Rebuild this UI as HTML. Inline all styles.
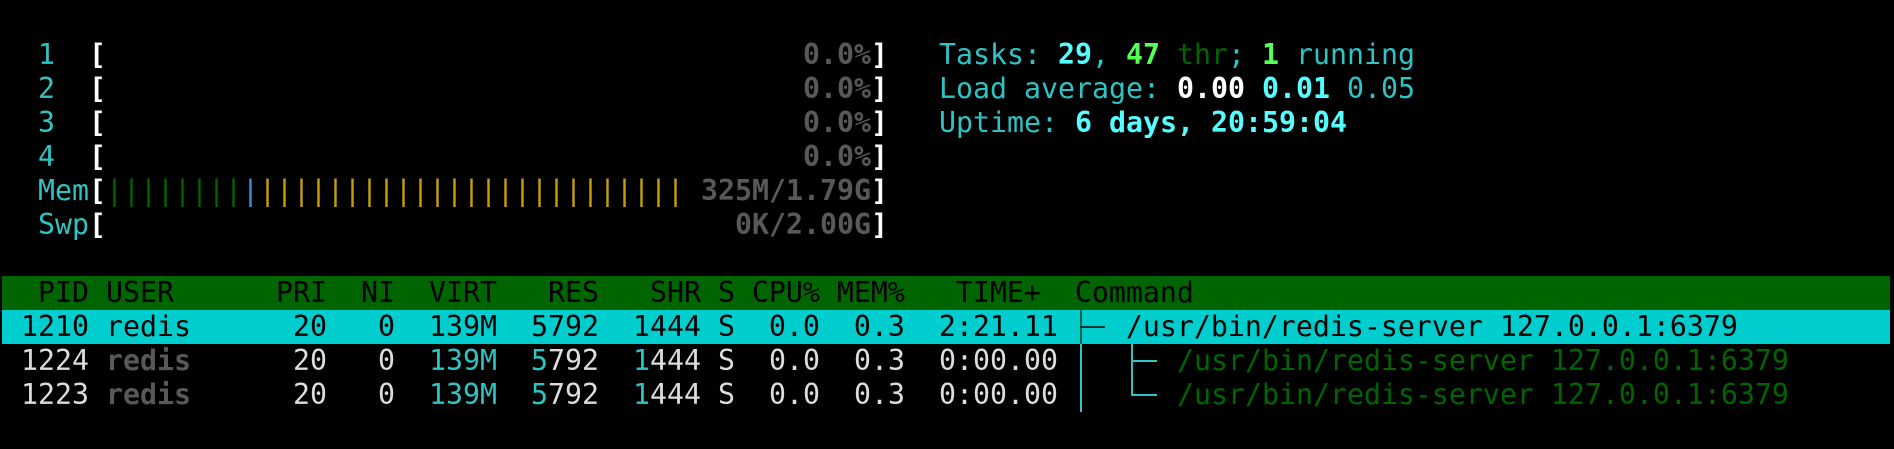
<!DOCTYPE html>
<html><head><meta charset="utf-8"><style>
html,body{margin:0;padding:0;background:#000;width:1894px;height:449px;overflow:hidden}
.l{position:absolute;left:4px;height:34px;line-height:34px;white-space:pre;font-family:"DejaVu Sans Mono","Liberation Mono",monospace;font-size:28.24px;color:#ddd}
.c{color:#2ec4c4}.bc{color:#55ffff;font-weight:bold}.g{color:#585858;font-weight:bold}.w{color:#fff;font-weight:bold}
.bg{color:#55ff55;font-weight:bold}.dg{color:#006400}.y{color:#c8a000}.bl{color:#3a8ee6}
.bar{position:absolute;left:2px;width:1888px;height:34px}
.ln{position:absolute}
</style></head><body>
<div class="l" style="top:38px">  <span class="c">1</span>  <span class="w">[</span>                                         <span class="g">0.0%</span><span class="w">]</span></div>
<div class="l" style="top:72px">  <span class="c">2</span>  <span class="w">[</span>                                         <span class="g">0.0%</span><span class="w">]</span></div>
<div class="l" style="top:106px">  <span class="c">3</span>  <span class="w">[</span>                                         <span class="g">0.0%</span><span class="w">]</span></div>
<div class="l" style="top:140px">  <span class="c">4</span>  <span class="w">[</span>                                         <span class="g">0.0%</span><span class="w">]</span></div>
<div class="l" style="top:174px">  <span class="c">Mem</span><span class="w">[</span><span class="dg">||||||||</span><span class="bl">|</span><span class="y">|||||||||||||||||||||||||</span> <span class="g">325M/1.79G</span><span class="w">]</span></div>
<div class="l" style="top:208px">  <span class="c">Swp</span><span class="w">[</span>                                     <span class="g">0K/2.00G</span><span class="w">]</span></div>

<div class="l" style="top:38px;left:939px"><span class="c">Tasks: </span><span class="bc">29</span><span class="c">, </span><span class="bg">47</span> <span class="dg">thr</span><span class="c">; </span><span class="bg">1</span><span class="c"> running</span></div>
<div class="l" style="top:72px;left:939px"><span class="c">Load average: </span><span class="w">0.00</span> <span class="bc">0.01</span> <span class="c">0.05</span></div>
<div class="l" style="top:106px;left:939px"><span class="c">Uptime: </span><span class="bc">6 days, 20:59:04</span></div>

<div class="bar" style="top:276px;background:#006400"></div>
<div class="bar" style="top:310px;background:#00cdcd"></div>
<div class="l" style="top:276px;color:#000">  PID USER      PRI  NI  VIRT   RES   SHR S CPU% MEM%   TIME+  Command</div>
<div class="l" style="top:310px;color:#000"> 1210 redis      20   0  139M  5792  1444 S  0.0  0.3  2:21.11    /usr/bin/redis-server 127.0.0.1:6379</div>
<div class="l" style="top:344px"> 1224 <span class="g">redis</span>      20   0  <span class="c">139M</span>  <span class="c">5</span>792  <span class="c">1</span>444 S  0.0  0.3  0:00.00       <span class="dg">/usr/bin/redis-server 127.0.0.1:6379</span></div>
<div class="l" style="top:378px"> 1223 <span class="g">redis</span>      20   0  <span class="c">139M</span>  <span class="c">5</span>792  <span class="c">1</span>444 S  0.0  0.3  0:00.00       <span class="dg">/usr/bin/redis-server 127.0.0.1:6379</span></div>

<div class="ln" style="left:1080px;top:310px;width:2px;height:34px;background:#064"></div>
<div class="ln" style="left:1080px;top:344px;width:2px;height:68px;background:#2ec4c4"></div>
<div class="ln" style="left:1080px;top:326px;width:25px;height:2px;background:#033"></div>
<div class="ln" style="left:1131px;top:344px;width:2px;height:52px;background:#2ec4c4"></div>
<div class="ln" style="left:1131px;top:360px;width:26px;height:2px;background:#2ec4c4"></div>
<div class="ln" style="left:1131px;top:394px;width:26px;height:2px;background:#2ec4c4"></div>
</body></html>
